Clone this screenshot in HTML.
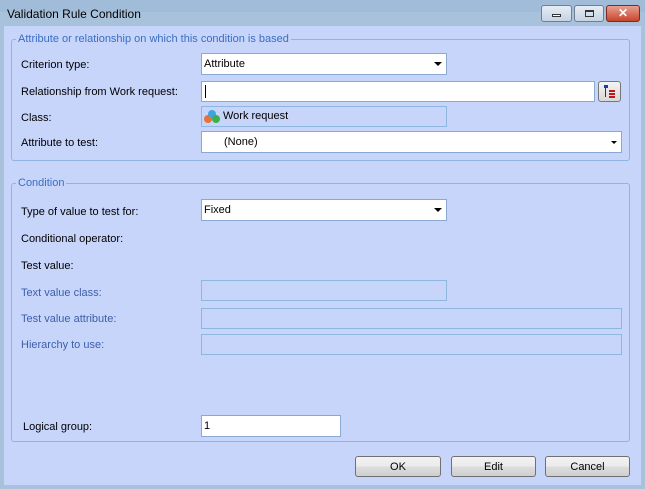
<!DOCTYPE html><html><head><style>
*{box-sizing:border-box}body{margin:0;width:645px;height:489px;overflow:hidden;background:#a9c2dc;font-family:"Liberation Sans",sans-serif;font-size:11px;color:#000;position:relative}
.a{position:absolute}
#body{left:4px;top:26px;width:637px;height:459px;background:#c8d5fb}
.grp{position:absolute;border:1px solid #8fb2e0;border-radius:3px}
.lg{position:absolute;background:#c8d5fb;color:#3a6ec0;font-size:11px;padding:0 2px;line-height:12px}
.lbl{position:absolute;left:21px;line-height:13px;margin-top:2px}
.dis{color:#3d5fa8}
.box{position:absolute;background:#fff;border:1px solid #8aa9d2;line-height:21px;padding-left:2px}
.dbox{position:absolute;border:1px solid #8fb6dc;background:#c8d5fb}
.arr{position:absolute;right:4px;top:8px;width:0;height:0;border-left:4px solid transparent;border-right:4px solid transparent;border-top:4px solid #000}
.btn{position:absolute;top:456px;height:21px;border:1px solid #707070;border-radius:3px;background:linear-gradient(#f2f2f2,#ebebeb 50%,#dddddd 51%,#cfcfcf);text-align:center;line-height:20px}
.wb{position:absolute;top:5px;height:17px;border:1px solid #6d7f95;border-radius:3px;background:linear-gradient(#e6edf5,#c5d3e3)}
</style></head><body>
<div class="a" style="left:0;top:0;width:645px;height:12px;background:#a0bcd8"></div>
<div class="a" style="left:7px;top:7px;font-size:12px;color:#000">Validation Rule Condition</div>
<div class="wb" style="left:541px;width:31px"><div class="a" style="left:10px;top:8px;width:9px;height:3px;border:1px solid #333;background:#fff"></div></div>
<div class="wb" style="left:574px;width:30px"><div class="a" style="left:10px;top:4px;width:9px;height:7px;border:1px solid #333;border-top-width:2px"></div></div>
<div class="wb" style="left:606px;width:34px;background:linear-gradient(#e8a090,#c8442c);border-color:#7a2a20;color:#fff;text-align:center;font-weight:bold;font-size:12px;line-height:15px">✕</div>
<div id="body" class="a"></div>
<div class="grp" style="left:11px;top:39px;width:619px;height:122px"></div>
<div class="lg" style="left:16px;top:33px">Attribute or relationship on which this condition is based</div>
<div class="grp" style="left:11px;top:183px;width:619px;height:259px"></div>
<div class="lg" style="left:16px;top:177px">Condition</div>

<div class="lbl" style="top:57px">Criterion type:</div>
<div class="box" style="left:201px;top:53px;width:246px;height:22px">Attribute<div class="arr"></div></div>
<div class="lbl" style="top:84px">Relationship from Work request:</div>
<div class="box" style="left:201px;top:81px;width:394px;height:21px"><div class="a" style="left:3px;top:3px;width:1px;height:13px;background:#000"></div></div>
<div class="a" style="left:598px;top:81px;width:23px;height:21px;border:1px solid #777;border-radius:3px;background:linear-gradient(#f4f4f4,#d8d8d8)">
<div class="a" style="left:5px;top:3px;width:4px;height:3px;background:#1a3ea8"></div><div class="a" style="left:6px;top:6px;width:1px;height:9px;background:#333"></div>
<div class="a" style="left:10px;top:8px;width:6px;height:2px;background:#c01818"></div><div class="a" style="left:10px;top:11px;width:6px;height:2px;background:#c01818"></div><div class="a" style="left:10px;top:14px;width:6px;height:2px;background:#c01818"></div></div>
<div class="lbl" style="top:110px">Class:</div>
<div class="dbox" style="left:201px;top:106px;width:246px;height:21px">
<div class="a" style="left:2px;top:8px;width:8px;height:8px;border-radius:50%;background:#e8703a"></div>
<div class="a" style="left:6px;top:3px;width:8px;height:8px;border-radius:50%;background:#3aa6e0"></div>
<div class="a" style="left:10px;top:8px;width:8px;height:8px;border-radius:50%;background:#3cb04a"></div>
<div class="a" style="left:21px;top:3px">Work request</div></div>
<div class="lbl" style="top:135px">Attribute to test:</div>
<div class="box" style="left:201px;top:131px;width:421px;height:22px;padding-left:22px">(None)<div class="arr" style="border-left-width:3px;border-right-width:3px;border-top-width:3px;top:9px"></div></div>

<div class="lbl" style="top:204px">Type of value to test for:</div>
<div class="box" style="left:201px;top:199px;width:246px;height:22px">Fixed<div class="arr"></div></div>
<div class="lbl" style="top:231px">Conditional operator:</div>
<div class="lbl" style="top:258px">Test value:</div>
<div class="lbl dis" style="top:285px">Text value class:</div>
<div class="dbox" style="left:201px;top:280px;width:246px;height:21px"></div>
<div class="lbl dis" style="top:311px">Test value attribute:</div>
<div class="dbox" style="left:201px;top:308px;width:421px;height:21px"></div>
<div class="lbl dis" style="top:337px">Hierarchy to use:</div>
<div class="dbox" style="left:201px;top:334px;width:421px;height:21px"></div>
<div class="lbl" style="top:419px;left:23px">Logical group:</div>
<div class="box" style="left:201px;top:415px;width:140px;height:22px">1</div>

<div class="btn" style="left:355px;width:86px">OK</div>
<div class="btn" style="left:451px;width:85px">Edit</div>
<div class="btn" style="left:545px;width:85px">Cancel</div>
</body></html>
